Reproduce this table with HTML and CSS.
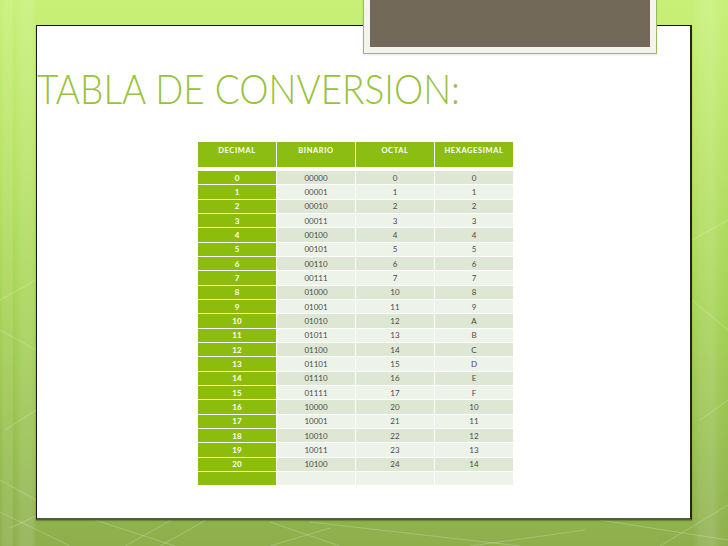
FILE: index.html
```html
<!DOCTYPE html>
<html lang="es">
<head>
<meta charset="utf-8">
<title>Tabla de conversión</title>
<link rel="stylesheet" href="styles.css">
</head>
<body>
<div class="slide">
  <svg class="bg-lines" width="728" height="546" viewBox="0 0 728 546" aria-hidden="true">
    <g fill="none" stroke="#ffffff" stroke-opacity="0.22" stroke-width="1">
      <path d="M0 512 L70 546"/>
      <path d="M10 528 L60 505"/>
      <path d="M95 520 L175 546"/>
      <path d="M125 546 L175 518"/>
      <path d="M160 546 L215 515"/>
      <path d="M270 522 L340 546"/>
      <path d="M270 546 L330 528"/>
      <path d="M585 530 L470 546"/>
      <path d="M310 522 L520 546"/>
      <path d="M600 520 L728 540"/>
      <path d="M660 546 L728 505"/>
      <path d="M700 420 L728 400"/>
      <path d="M0 300 L36 280"/>
      <path d="M0 330 L36 350"/>
      <path d="M5 430 L36 410"/>
      <path d="M0 480 L36 500"/>
      <path d="M692 240 L728 220"/>
      <path d="M692 300 L728 330"/>
    </g>
  </svg>

  <div class="frame"><div class="frame-inner"></div></div>

  <div class="panel">
    <h1 class="title">TABLA DE CONVERSION:</h1>

    <div class="conv">
      <div class="conv-head">
        <div class="hcell">DECIMAL</div>
        <div class="hcell">BINARIO</div>
        <div class="hcell">OCTAL</div>
        <div class="hcell">HEXAGESIMAL</div>
      </div>
      <div class="conv-body">
        <div class="row even"><span class="dec">0</span><span>00000</span><span>0</span><span>0</span></div>
        <div class="row odd"><span class="dec">1</span><span>00001</span><span>1</span><span>1</span></div>
        <div class="row even"><span class="dec">2</span><span>00010</span><span>2</span><span>2</span></div>
        <div class="row odd"><span class="dec">3</span><span>00011</span><span>3</span><span>3</span></div>
        <div class="row even"><span class="dec">4</span><span>00100</span><span>4</span><span>4</span></div>
        <div class="row odd"><span class="dec">5</span><span>00101</span><span>5</span><span>5</span></div>
        <div class="row even"><span class="dec">6</span><span>00110</span><span>6</span><span>6</span></div>
        <div class="row odd"><span class="dec">7</span><span>00111</span><span>7</span><span>7</span></div>
        <div class="row even"><span class="dec">8</span><span>01000</span><span>10</span><span>8</span></div>
        <div class="row odd"><span class="dec">9</span><span>01001</span><span>11</span><span>9</span></div>
        <div class="row even"><span class="dec">10</span><span>01010</span><span>12</span><span>A</span></div>
        <div class="row odd"><span class="dec">11</span><span>01011</span><span>13</span><span>B</span></div>
        <div class="row even"><span class="dec">12</span><span>01100</span><span>14</span><span>C</span></div>
        <div class="row odd"><span class="dec">13</span><span>01101</span><span>15</span><span>D</span></div>
        <div class="row even"><span class="dec">14</span><span>01110</span><span>16</span><span>E</span></div>
        <div class="row odd"><span class="dec">15</span><span>01111</span><span>17</span><span>F</span></div>
        <div class="row even"><span class="dec">16</span><span>10000</span><span>20</span><span>10</span></div>
        <div class="row odd"><span class="dec">17</span><span>10001</span><span>21</span><span>11</span></div>
        <div class="row even"><span class="dec">18</span><span>10010</span><span>22</span><span>12</span></div>
        <div class="row odd"><span class="dec">19</span><span>10011</span><span>23</span><span>13</span></div>
        <div class="row even"><span class="dec">20</span><span>10100</span><span>24</span><span>14</span></div>
        <div class="row odd"><span class="dec"></span><span></span><span></span><span></span></div>
      </div>
    </div>
  </div>
</div>
</body>
</html>
```

FILE: styles.css
```css
html, body {
  margin: 0;
  padding: 0;
}

body {
  width: 728px;
  height: 546px;
  overflow: hidden;
  font-family: Lato, "Liberation Sans", sans-serif;
}

.slide {
  position: relative;
  width: 728px;
  height: 546px;
  box-sizing: border-box;
  padding: 25px 0 0 36px;
  overflow: hidden;
  background:
    linear-gradient(90deg,
      rgba(255,255,255,0) 0px,
      rgba(255,255,255,0.10) 4px,
      rgba(255,255,255,0.10) 12px,
      rgba(255,255,255,0) 14px,
      rgba(255,255,255,0.12) 22px,
      rgba(255,255,255,0.12) 32px,
      rgba(255,255,255,0) 36px,
      rgba(255,255,255,0) 692px,
      rgba(255,255,255,0.10) 700px,
      rgba(255,255,255,0.14) 712px,
      rgba(255,255,255,0.04) 720px,
      rgba(255,255,255,0) 728px),
    linear-gradient(180deg, #c8f077 0px, #b8e465 150px, #a6d455 300px, #98c14f 430px, #8eae4c 546px);
}

.bg-lines {
  position: absolute;
  left: 0;
  top: 0;
  pointer-events: none;
}

.panel {
  position: relative;
  width: 656px;
  height: 495px;
  box-sizing: border-box;
  background: #ffffff;
  border-top: 1px solid #111111;
  border-left: 1px solid #1a1a1a;
  border-right: 2px solid #1f2a14;
  border-bottom: 2px solid #4f5e3d;
  box-shadow: 0 1px 1px rgba(40, 60, 20, 0.35);
}

.frame {
  position: absolute;
  left: 363px;
  top: -8px;
  width: 294px;
  height: 62px;
  box-sizing: border-box;
  border: 1px solid #9cb862;
  background: #f4f3ed;
  padding: 6px;
  z-index: 2;
  box-shadow: 0 1px 2px rgba(0, 0, 0, 0.1);
}

.frame-inner {
  width: 100%;
  height: 100%;
  background: #736959;
}

.title {
  margin: 0;
  padding: 41px 0 0 0;
  font-family: Lato, "Liberation Sans", sans-serif;
  font-weight: 300;
  font-size: 42px;
  line-height: 42px;
  color: #97c33a;
  white-space: nowrap;
  transform: scaleX(0.88);
  transform-origin: left top;
}

.conv {
  margin: 33px 0 0 161px;
  width: 315px;
}

.conv-head,
.row {
  display: grid;
  grid-template-columns: 78px 78px 78px 78px;
  column-gap: 1px;
}

.conv-head {
  height: 25px;
  margin-bottom: 4px;
}

.hcell {
  background: #8cbd12;
  color: #ffffff;
  font-size: 7.5px;
  font-weight: 700;
  letter-spacing: 0.6px;
  text-align: center;
  padding-top: 4px;
  line-height: 9px;
}

.conv-body {
  display: flex;
  flex-direction: column;
  gap: 1px;
}

.row {
  height: 13.33px;
}

.row span {
  display: flex;
  align-items: center;
  justify-content: center;
  font-size: 8px;
  color: #4a4a4a;
  line-height: 1;
}

.row.even span {
  background: #dee7d4;
}

.row.odd span {
  background: #eef3ea;
}

.row span.dec,
.row.even span.dec,
.row.odd span.dec {
  background: #8cbd0d;
  color: #ffffff;
  font-weight: 700;
}
```
